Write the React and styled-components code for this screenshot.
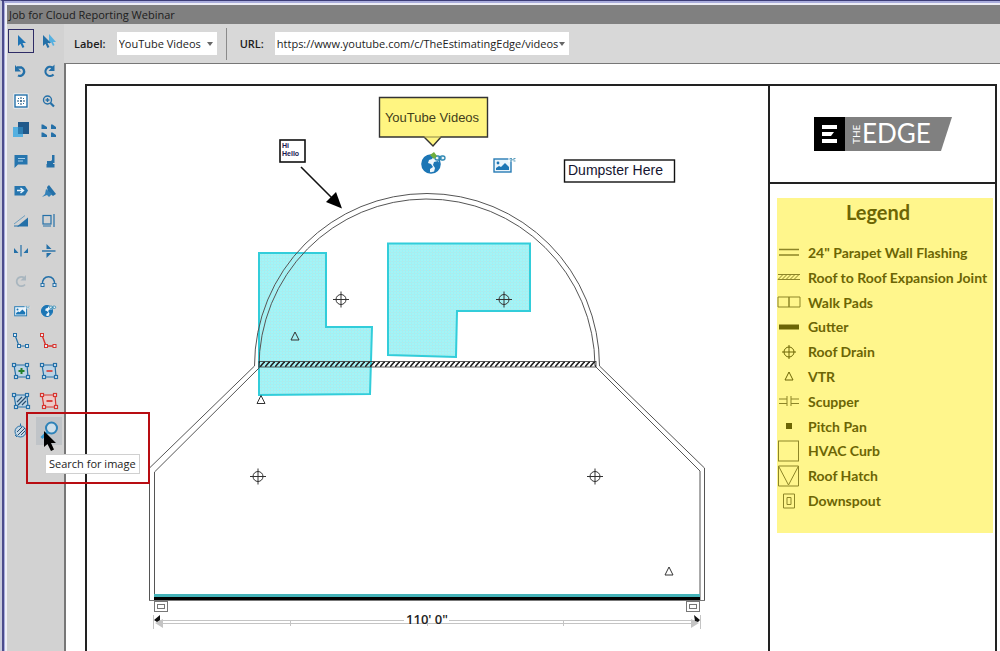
// Packages
import React from 'react'
import styled, { createGlobalStyle } from 'styled-components'

const GlobalStyle = createGlobalStyle`
  * {
    box-sizing: border-box;
  }
  body {
    margin: 0;
    background: #fff;
    font-family: 'Open Sans', 'Noto Sans', sans-serif;
    font-size: 11px;
    color: #1c1c1c;
  }
`

// Window
const Window = styled.div`
  display: flex;
  flex-direction: column;
  height: 100vh;
  overflow: hidden;
  background: #d6d6d6;
  border-top: 1px solid #3c3c78;
  border-left: 2px solid #c9cbdc;
  box-shadow: inset 2px 0 0 #4c4c8c, inset 3px 2px 0 #a9acdc, inset 5px 4px 0 #eeeef6;
  padding: 4px 0 0 5px;
`

const TitleBar = styled.header`
  flex: none;
  height: 19px;
  padding-left: 2px;
  background: #808080;
  line-height: 20px;
`

const Title = styled.h1`
  margin: 0;
  font-size: 11px;
  font-weight: 400;
`

const Body = styled.div`
  display: flex;
  flex: 1;
  min-height: 0;
`

const Main = styled.div`
  display: flex;
  flex-direction: column;
  flex: 1;
  min-width: 0;
`

// Tool palette
const Palette = styled.nav`
  display: grid;
  grid-template-columns: 28px 28px;
  grid-auto-rows: 30px;
  align-content: start;
  flex: none;
  width: 57px;
  padding-top: 2px;
  background: #d2d2d2;
`

const ToolSlot = styled.div`
  position: relative;
  display: flex;
  align-items: center;
  justify-content: center;
`

const ToolButton = styled.button`
  display: flex;
  align-items: center;
  justify-content: center;
  width: 26px;
  height: ${props => (props.$hovered ? '28px' : '24px')};
  padding: 0;
  border: ${props => (props.$selected ? '1px solid #2e2c66' : '0')};
  background: ${props => (props.$hovered ? '#c0c4c8' : 'transparent')};
`

const ToolSvg = styled.svg`
  flex: none;
  width: 20px;
  height: 20px;
  overflow: visible;
`

const Highlight = styled.div`
  position: absolute;
  z-index: 2;
  top: -4px;
  left: -9px;
  width: 124px;
  height: 72px;
  border: 2px solid #b80d12;
  pointer-events: none;
`

const Tooltip = styled.div`
  position: absolute;
  z-index: 3;
  top: 38px;
  left: 10px;
  height: 20px;
  padding: 0 3px;
  border: 1px solid #d0d0d0;
  background: #fff;
  line-height: 18px;
  white-space: nowrap;
`

const Cursor = styled.svg`
  position: absolute;
  z-index: 4;
  top: 15px;
  left: 8px;
  width: 13px;
  height: 20px;
`

// Toolbar
const Toolbar = styled.div`
  display: flex;
  align-items: center;
  flex: none;
  height: 39px;
  padding-left: 10px;
  background: #d8d8d8;
`

const Field = styled.label`
  display: flex;
  align-items: center;
  gap: 11px;
  font-weight: 600;
`

const SelectBox = styled.span`
  position: relative;
  display: flex;

  &::after {
    content: '';
    position: absolute;
    top: 10px;
    right: 4px;
    border: 3px solid transparent;
    border-top: 4px solid #666;
    border-bottom: 0;
    pointer-events: none;
  }
`

const Select = styled.select`
  width: ${props => props.$width};
  height: 23px;
  padding: 0 2px;
  border: 0;
  border-radius: 0;
  appearance: none;
  background: #fff;
  color: #1c1c1c;
  font: 400 11px 'Open Sans', 'Noto Sans', sans-serif;
`

const Divider = styled.span`
  width: 1px;
  height: 32px;
  margin: 0 13px 0 9px;
  background: #8a8a8a;
`

// Drawing sheet
const Canvas = styled.main`
  display: flex;
  flex: 1;
  min-height: 0;
  padding: 20px 3px 0 19px;
  border-top: 1px solid #777;
  border-left: 2px solid #777;
  background: #fff;
`

const Sheet = styled.div`
  display: flex;
  flex: 1;
  min-width: 0;
  border: 2px solid #222;
  border-bottom: 0;
`

const PlanSvg = styled.svg`
  flex: 1;
  min-width: 0;
  align-self: flex-start;
  font-family: 'Liberation Sans', Arial, sans-serif;
`

const SideColumn = styled.aside`
  flex: none;
  width: 227px;
  border-left: 2px solid #222;
`

const LogoCell = styled.div`
  display: flex;
  justify-content: center;
  height: 98px;
  padding: 31px 0 0 3px;
  border-bottom: 2px solid #222;
`

const LegendPanel = styled.section`
  height: 335px;
  margin: 14px 2px 0 7px;
  background: #fff68c;
  color: #6c6504;
  font-family: Lato, 'Open Sans', sans-serif;
`

const LegendTitle = styled.h2`
  margin: 0;
  padding: 0 14px 14px 0;
  font-size: 20px;
  font-weight: 700;
  line-height: 28px;
  text-align: center;
`

const LegendList = styled.ul`
  display: grid;
  grid-auto-rows: 1fr;
  height: 273px;
  margin: 0;
  padding: 0;
  list-style: none;
`

const LegendRow = styled.li`
  display: flex;
  align-items: center;
  gap: 7px;
  font-size: 14px;
  font-weight: 700;
  white-space: nowrap;
`

const LegendSvg = styled.svg`
  flex: none;
  width: 24px;
  height: 24px;
  fill: none;
  stroke: #8d8527;
`

const B = '#2470a8'
const L = '#55b0e0'
const R = '#d8352f'

const Nodes = ({ points, color = B }) =>
  points.map(([x, y]) => (
    <rect
      key={`${x}-${y}`}
      x={x - 1.5}
      y={y - 1.5}
      width="3"
      height="3"
      fill="#e4edf4"
      stroke={color}
    />
  ))

const corners = [[3, 4], [16, 4], [17, 16], [5, 16]]

const Polygon = ({ color = B, children }) => (
  <g fill="none" stroke={color} strokeWidth="1.2">
    <path d="M3 4H16L17 16H5Z" fill={color === B ? '#bcd3e4' : '#eccac8'} />
    <Nodes points={corners} color={color} />
    {children}
  </g>
)

const Globe = ({ x = 0, y = 0, scale = 1 }) => (
  <g transform={`translate(${x} ${y}) scale(${scale})`}>
    <circle cx="0" cy="0" r="9" fill="#eef6fb" stroke="#1c76b5" strokeWidth="1.6" />
    <path
      d="M-8 -4C-6 -8 -2 -10 3 -8L1 -5 -2 -4 -3 -1 0 0 2 3 -1 5 -1 8 -4 8C-8 6 -10 1 -8 -4ZM3 -2L7 -3 9 0C9 4 6 7 3 8L4 4 2 1Z"
      fill="#1c76b5"
    />
    <g fill="#e9f2f6" stroke="#2d87b3" strokeWidth="1.3">
      <rect x="4" y="-8" width="5" height="4" rx="2" />
      <rect x="9" y="-8" width="5" height="4" rx="2" />
      <path d="M7 -6H11" />
    </g>
  </g>
)

const Picture = () => (
  <g>
    <rect x="1" y="1" width="17" height="13" fill="#eaf4fb" stroke="#287cb5" strokeWidth="1.4" />
    <path d="M3 12V10L6 8 8 9 12 5 16 9V12Z" fill="#1c76b5" />
    <circle cx="5" cy="5" r="1.4" fill="#1c76b5" />
    <path d="M15 0H23V4H15Z" fill="#fff" stroke="none" opacity=".6" />
    <path d="M17 .5H19M20.500 .5H22.500M17 3H19M20.500 3H22.500M18 1.800H21.500" stroke="#5b9dbd" />
  </g>
)

const pointer = 'M7 4V15L9.5 12.7 11.5 17 13.4 16 11.5 12H15Z'

const tools = [
  {
    name: 'Select',
    selected: true,
    icon: <path d={pointer} fill="#1f74b4" />
  },
  {
    name: 'Multi select',
    icon: (
      <g>
        <path d="M10 3V13L12 11 14 15 15.5 14 14 11H17Z" fill={L} />
        <path d="M4 4V15L6.5 12.7 8.5 17 10.4 16 8.5 12H12Z" fill={B} />
      </g>
    )
  },
  {
    name: 'Undo',
    icon: (
      <g>
        <path d="M6 6.500H10.500A3.900 3.900 0 1 1 7 14.500" fill="none" stroke={B} strokeWidth="2.4" />
        <path d="M4 4V10.500H10Z" fill={B} />
      </g>
    )
  },
  {
    name: 'Redo',
    icon: (
      <g>
        <path d="M13.500 6.500A4.600 4.600 0 1 0 14.500 13.500" fill="none" stroke={B} strokeWidth="2.2" />
        <path d="M15.500 3.500V10H9.500Z" fill={B} />
      </g>
    )
  },
  {
    name: 'Fit to page',
    icon: (
      <g>
        <rect x="2.500" y="2.500" width="15" height="15" fill="#f4f8fb" />
        <rect x="4" y="4" width="12" height="12" fill="#fff" stroke={B} strokeWidth="1.4" />
        <path d="M10 6V14M6 10H14" stroke="#174c77" strokeDasharray="2 1" />
        <path d="M7 7.5H8M12 7.5H13M7 12.5H8M12 12.5H13" stroke={B} />
      </g>
    )
  },
  {
    name: 'Zoom in',
    icon: (
      <g fill="none" stroke={B} strokeWidth="1.4">
        <circle cx="8.5" cy="9" r="4" />
        <path d="M6.5 9H10.5M8.5 7V11" />
        <path d="M11.5 12L15 15.500" strokeWidth="2.2" />
      </g>
    )
  },
  {
    name: 'Bring to front',
    icon: (
      <g>
        <rect x="2" y="6" width="10" height="10" fill={L} />
        <rect x="7" y="1" width="11" height="12" fill="#21598a" />
        <rect x="7" y="6" width="5" height="7" fill="#2d7db2" />
      </g>
    )
  },
  {
    name: 'Fit window',
    icon: (
      <g fill={B}>
        <path d="M2.500 3.500H4L8 6V8H2.500ZM12 3.500H13.500L17 6V8H12ZM2.500 11.500H4L8 14V16H2.500ZM12 11.500H13.500L17 14V16H12Z" />
      </g>
    )
  },
  {
    name: 'Comment',
    icon: (
      <g>
        <path d="M3.500 4H16.500V13.500H7L3.500 17Z" fill="#2675ae" />
        <path d="M7 7.5H14M7 10H12" stroke="#a8cee8" />
      </g>
    )
  },
  {
    name: 'Stamp',
    icon: (
      <g fill={B}>
        <path d="M8 10H12L13 9V4H15.500V12H14V13H8Z" />
        <rect x="7.500" y="13" width="8" height="3.500" />
      </g>
    )
  },
  {
    name: 'Tag',
    icon: (
      <g>
        <path d="M3.500 5H14L17 9.500 14 14.500H3.500Z" fill="#2675ae" />
        <path d="M6 9.5H12M9.500 7L12.5 9.5 9.500 12" fill="none" stroke="#e8f4fc" strokeWidth="1.4" />
      </g>
    )
  },
  {
    name: 'Marker',
    icon: (
      <g fill={B}>
        <path d="M8 6L10 4 17 13 14 15 9 11Z" />
        <path d="M7 8L13 13 10 16 8 14 3 16 6 13Z" fill="#3381b8" />
      </g>
    )
  },
  {
    name: 'Slope',
    icon: (
      <g>
        <path d="M17 6.500V15.500H6Z" fill={B} />
        <path d="M3 13L14 4.500" stroke="#6f9fc0" />
        <path d="M3 15H8" stroke={B} />
      </g>
    )
  },
  {
    name: 'Align right',
    icon: (
      <g fill="none" stroke={B} strokeWidth="1.2">
        <rect x="4" y="4.5" width="8" height="8.500" />
        <path d="M15 3V16M4 15H12" />
      </g>
    )
  },
  {
    name: 'Flip horizontal',
    icon: (
      <g fill={B}>
        <path d="M3 7L7.500 12H3ZM17 7V12H12.500Z" />
        <path d="M10 4V15.500" stroke={B} strokeWidth="1.2" />
      </g>
    )
  },
  {
    name: 'Flip vertical',
    icon: (
      <g fill={B}>
        <path d="M7.500 3L12.500 8H7.500ZM7.500 17L12.500 12H7.500Z" />
        <path d="M3 10H16.500" stroke={B} strokeWidth="1.4" />
      </g>
    )
  },
  {
    name: 'Rotate',
    icon: (
      <g>
        <path d="M13.500 7A4.700 4.700 0 1 0 14 13.500" fill="none" stroke="#a9b6bf" strokeWidth="1.8" />
        <path d="M15 4V9.500H9.500Z" fill="#a9b6bf" />
      </g>
    )
  },
  {
    name: 'Arc',
    icon: (
      <g>
        <path d="M3.500 14C2 3 17 3 15.500 14" fill="none" stroke={B} strokeWidth="1.6" />
        <Nodes points={[[3.5, 14], [15.5, 14]]} />
      </g>
    )
  },
  {
    name: 'Image link',
    icon: (
      <g transform="translate(3 5) scale(.7)">
        <Picture />
      </g>
    )
  },
  { name: 'Web link', icon: <Globe x={8} y={10} scale={0.62} /> },
  {
    name: 'Add segment',
    icon: (
      <g>
        <path d="M4 4L8 15H16" fill="none" stroke={B} strokeWidth="1.2" />
        <Nodes points={[[4, 4], [8, 15], [16, 15]]} />
      </g>
    )
  },
  {
    name: 'Remove segment',
    icon: (
      <g>
        <path d="M3 4L7 15H15.500" fill="none" stroke={R} strokeWidth="1.4" />
        <Nodes points={[[3, 4], [7, 15], [15.5, 15]]} color={R} />
      </g>
    )
  },
  {
    name: 'Add area',
    icon: (
      <Polygon>
        <path d="M10.5 7V13M7.5 10H13.5" stroke="#24802d" strokeWidth="2" />
      </Polygon>
    )
  },
  {
    name: 'Subtract area',
    icon: (
      <Polygon>
        <path d="M7.5 10H13.5" stroke={R} strokeWidth="1.6" />
      </Polygon>
    )
  },
  {
    name: 'Hatch area',
    icon: (
      <Polygon>
        <path d="M6 11L11 6M7 14L15 6M11 14L15 10" stroke="#294f70" />
      </Polygon>
    )
  },
  {
    name: 'Delete area',
    icon: (
      <Polygon color={R}>
        <path d="M7.5 10H13.5" stroke={R} strokeWidth="1.8" />
      </Polygon>
    )
  },
  {
    name: 'Hatch circle',
    icon: (
      <g fill="none" stroke={B}>
        <circle cx="9.500" cy="10.500" r="5.5" fill="#c4d6e4" />
        <path d="M6 11L11 6M7 14L14 7M10 14L14 10" stroke="#294f70" />
        <path d="M9.500 2.500V5M6 16L4 14" />
      </g>
    )
  },
  {
    name: 'Search for image',
    hovered: true,
    icon: (
      <g fill="none" stroke="#2d82b8">
        <circle cx="12.5" cy="7" r="5.5" strokeWidth="2" fill="#cfdfe9" />
        <path d="M8.500 11L2.500 17" strokeWidth="3" stroke="#3a9bd0" />
      </g>
    )
  }
]

const Drain = ({ x, y }) => (
  <g fill="none" stroke="#333">
    <circle cx={x} cy={y} r="5" />
    <path d={`M${x - 8} ${y}H${x + 8}M${x} ${y - 8}V${y + 8}`} />
  </g>
)

const Vent = ({ x, y }) => (
  <path d={`M${x} ${y - 4}L${x + 4} ${y + 4}H${x - 4}Z`} fill="none" stroke="#333" />
)

const Downspout = ({ x }) => (
  <g fill="none" stroke="#777">
    <rect x={x + 0.5} y="601.5" width="13" height="10" />
    <rect x={x + 3.5} y="604.5" width="7" height="4" />
  </g>
)

// Roof plan, in sheet coordinates
const Plan = () => (
  <PlanSvg viewBox="87 86 681 565">
    <defs>
      <pattern id="dots" width="3" height="3" patternUnits="userSpaceOnUse">
        <rect width="3" height="3" fill="#92f3f6" />
        <rect width="1" height="1" fill="#b9dfe2" />
        <rect x="1.5" y="1.5" width="1" height="1" fill="#c6eef0" />
      </pattern>
      <pattern id="hatch" width="5" height="6" patternUnits="userSpaceOnUse" y="361">
        <path d="M0 6L5 0" stroke="#222" strokeWidth="1.6" />
      </pattern>
    </defs>

    <g fill="url(#dots)" stroke="#1cc8d6" strokeWidth="2" opacity=".9">
      <path d="M259 253H326V327H372L370 394 259 395Z" />
      <path d="M388 243.500H530V311H457L456 357 388 355Z" />
    </g>

    <g fill="none" stroke="#555">
      <path d="M149.500 600V468L254.500 366A172.500 172.500 0 0 1 599.500 366L704.500 468V600" />
      <path d="M154.500 600V472L259 368A168 168 0 0 1 595 366L700 471V600" />
      <path d="M149 600.500H705" stroke="#777" />
    </g>
    <rect x="259" y="361.500" width="337" height="5.500" fill="url(#hatch)" stroke="#333" strokeWidth=".8" />

    <path d="M154 595.500H700" stroke="#45b3b9" strokeWidth="3" />
    <path d="M154 598.500H700" stroke="#000" strokeWidth="3" />
    <Downspout x={154} />
    <Downspout x={686} />

    <Drain x={341} y={299.500} />
    <Drain x={504} y={299.500} />
    <Drain x={258} y={476.500} />
    <Drain x={595} y={476.500} />
    <Vent x={295} y={336} />
    <Vent x={261} y={399.500} />
    <Vent x={669} y={571} />

    <g stroke="#c4c4c4" fill="#c4c4c4">
      <path d="M158 620.500H404M449 620.500H696M158 623.500H696" />
      <path d="M153.500 615V629M290.500 621V626M427.500 621V626M563.500 621V626M700.500 615V629" />
      <path d="M155 623L163 619V628ZM699 623L691 619V628Z" stroke="none" />
      <path d="M154 620L160 615V620L157 622ZM700 620L694 615 695 621 698 622Z" fill="#111" stroke="none" />
    </g>
    <text
      x="427"
      y="624"
      textAnchor="middle"
      fontFamily="Open Sans"
      fontSize="13"
      fontWeight="600"
      fill="#222"
    >
      110' 0"
    </text>

    <path d="M379.500 97.500H487.500V137H441L433 146 424 137H379.500Z" fill="#fff581" stroke="#333" strokeWidth="1.4" />
    <path d="M424 137H441" stroke="#8b8546" />
    <text x="432" y="122" textAnchor="middle" fontSize="13" fill="#423e1b">
      YouTube Videos
    </text>

    <rect x="280" y="140" width="25" height="22" fill="#fff" stroke="#111" strokeWidth="1.6" />
    <g fontSize="7" fontWeight="700" fill="#1a1850">
      <text x="282" y="148">Hi</text>
      <text x="282" y="156">Hello</text>
    </g>
    <path d="M301 167L334 200" stroke="#111" strokeWidth="1.6" />
    <path d="M342 208.500L326 202 336 192Z" fill="#000" />

    <Globe x={431} y={164} />
    <path d="M430 155L434 152 437 156 434 159Z" fill="#6fae3d" />
    <g transform="translate(493 158)">
      <Picture />
    </g>

    <rect x="564.500" y="160" width="110" height="22" fill="#fff" stroke="#111" strokeWidth="1.4" />
    <text x="568" y="175" fontSize="14" fill="#151530">
      Dumpster Here
    </text>
  </PlanSvg>
)

const Logo = () => (
  <svg width="140" height="34" viewBox="0 0 140 34" role="img" aria-label="The Edge">
    <path d="M31 0H138L127 34H31Z" fill="#808080" />
    <path d="M0 0H31V34H0Z" fill="#000" />
    <path d="M8 8H23V12H8ZM8 15H20L17 19H8ZM8 22H23V26H8Z" fill="#fff" />
    <g fill="#fff" fontFamily="Lato">
      <text transform="translate(46 27) rotate(-90)" fontSize="10">
        THE
      </text>
      <text x="48" y="26" fontSize="26">
        EDGE
      </text>
    </g>
  </svg>
)

const legend = [
  { label: '24" Parapet Wall Flashing', icon: <path d="M2 9.500H22M2 15H22" strokeWidth="1.3" /> },
  {
    label: 'Roof to Roof Expansion Joint',
    icon: (
      <path d="M1 9.500H23M1 14.500H23M1 14.500L6 9.500M5 14.500L10 9.500M9 14.500L14 9.500M13 14.500L18 9.500M17 14.500L22 9.500" />
    )
  },
  { label: 'Walk Pads', icon: <path d="M1 7H12V17H1ZM12 7H23V17H12Z" /> },
  { label: 'Gutter', icon: <path d="M2 12H22" stroke="#6c6504" strokeWidth="5" /> },
  {
    label: 'Roof Drain',
    icon: (
      <g stroke="#6c6504">
        <circle cx="12" cy="12" r="5" />
        <path d="M5 12H19M12 5V19" />
      </g>
    )
  },
  { label: 'VTR', icon: <path d="M12 8L16 16H8Z" stroke="#6c6504" /> },
  { label: 'Scupper', icon: <path d="M2 10H10M2 14.500H10M10 7V17M14 7V17M14 10H22M14 14.500H22" /> },
  { label: 'Pitch Pan', icon: <rect x="9" y="9" width="6" height="6" fill="#6c6504" stroke="none" /> },
  { label: 'HVAC Curb', icon: <rect x="1.500" y="2" width="20" height="20" /> },
  { label: 'Roof Hatch', icon: <path d="M1.500 2H21.500V22H1.500ZM1.500 2L11.500 21 21.500 2" /> },
  { label: 'Downspout', icon: <path d="M6.500 5H17.500V19H6.500ZM10 8.500H14V15.500H10Z" /> }
]

const App = () => (
  <>
    <GlobalStyle />
    <Window>
      <TitleBar>
        <Title>Job for Cloud Reporting Webinar</Title>
      </TitleBar>
      <Body>
        <Palette aria-label="Tools">
          {tools.map(({ name, icon, selected, hovered }) => (
            <ToolSlot key={name}>
              <ToolButton type="button" aria-label={name} $selected={selected} $hovered={hovered}>
                <ToolSvg viewBox="0 0 20 20">{icon}</ToolSvg>
              </ToolButton>
              {hovered && (
                <>
                  <Highlight />
                  <Tooltip role="tooltip">{name}</Tooltip>
                  <Cursor viewBox="0 0 13 20">
                    <path d="M1 0V16L4.500 13 8 20 11 18.500 8 12H13Z" fill="#000" />
                  </Cursor>
                </>
              )}
            </ToolSlot>
          ))}
        </Palette>
        <Main>
          <Toolbar>
            <Field>
              Label:
              <SelectBox>
                <Select $width="100px">
                  <option>YouTube Videos</option>
                </Select>
              </SelectBox>
            </Field>
            <Divider />
            <Field>
              URL:
              <SelectBox>
                <Select $width="294px">
                  <option>https://www.youtube.com/c/TheEstimatingEdge/videos</option>
                </Select>
              </SelectBox>
            </Field>
          </Toolbar>
          <Canvas>
            <Sheet>
              <Plan />
              <SideColumn>
                <LogoCell>
                  <Logo />
                </LogoCell>
                <LegendPanel>
                  <LegendTitle>Legend</LegendTitle>
                  <LegendList>
                    {legend.map(({ label, icon }) => (
                      <LegendRow key={label}>
                        <LegendSvg viewBox="0 0 24 24">{icon}</LegendSvg>
                        {label}
                      </LegendRow>
                    ))}
                  </LegendList>
                </LegendPanel>
              </SideColumn>
            </Sheet>
          </Canvas>
        </Main>
      </Body>
    </Window>
  </>
)

export default App
